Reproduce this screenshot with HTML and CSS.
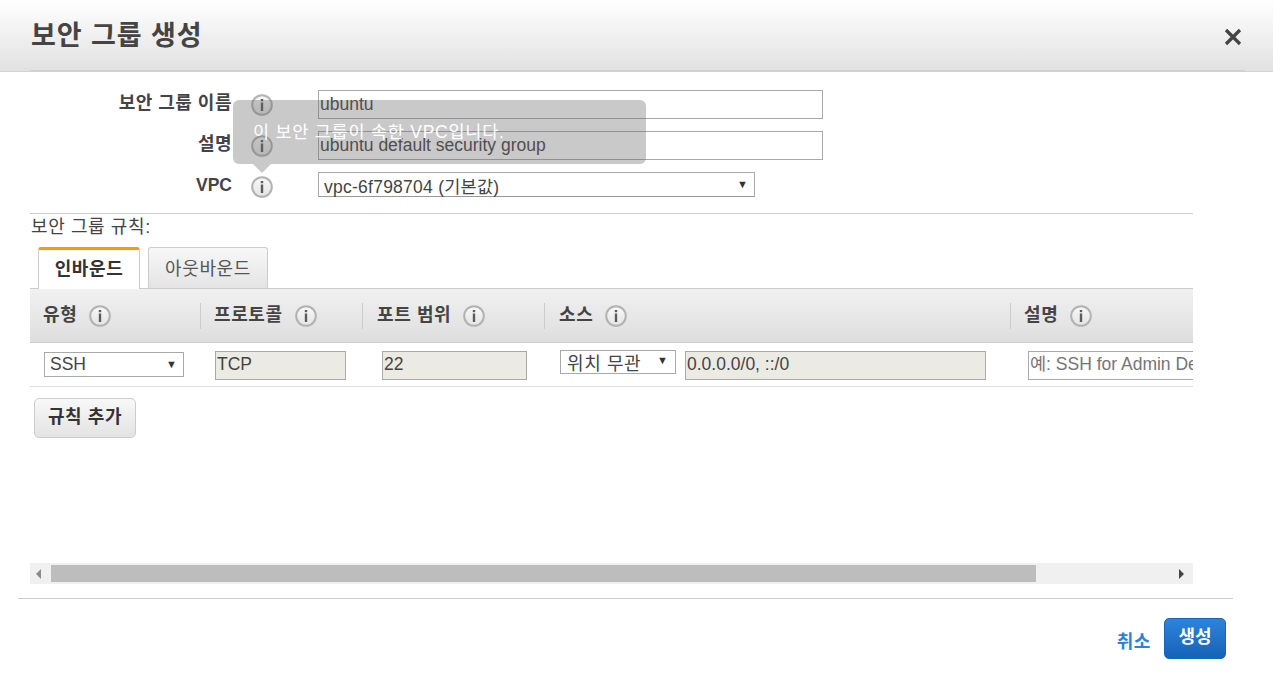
FILE: index.html
```html
<!DOCTYPE html>
<html lang="ko">
<head>
<meta charset="utf-8">
<title>보안 그룹 생성</title>
<link rel="stylesheet" href="styles.css">
</head>
<body>
<svg class="defs" width="0" height="0" aria-hidden="true">
  <defs>
    <linearGradient id="ig" x1="0" y1="0" x2="0" y2="1"><stop offset="0" stop-color="#f8f8f8"/><stop offset="1" stop-color="#e4e4e4"/></linearGradient>
    <symbol id="info" viewBox="0 0 22 22">
      <circle cx="11" cy="11" r="9.8" fill="url(#ig)" stroke="#b2b2b2" stroke-width="2"/>
      <rect x="9.8" y="5" width="2.4" height="2.2" fill="#5c5c5c"/>
      <rect x="9.8" y="8.5" width="2.4" height="8.5" fill="#5c5c5c"/>
    </symbol>
  </defs>
</svg>
<div class="dialog">
  <header class="head">
    <h1 class="title">보안 그룹 생성</h1>
    <svg class="close" width="18" height="18" viewBox="0 0 18 18"><path d="M2 2 16 16M16 2 2 16" stroke="#444" stroke-width="3.2" fill="none"/></svg>
  </header>
  <div class="body">
    <form class="form">
      <div class="row">
        <label class="lbl">보안 그룹 이름</label>
        <svg class="ico"><use href="#info"/></svg>
        <input class="inp inp-wide" value="ubuntu">
      </div>
      <div class="row">
        <label class="lbl">설명</label>
        <svg class="ico"><use href="#info"/></svg>
        <input class="inp inp-wide" value="ubuntu default security group">
      </div>
      <div class="row row-vpc">
        <label class="lbl">VPC</label>
        <svg class="ico"><use href="#info"/></svg>
        <div class="sel sel-vpc"><span>vpc-6f798704 (기본값)</span><i class="caret">▼</i></div>
      </div>
      <div class="tip">이 보안 그룹이 속한 VPC입니다.</div>
    </form>
    <section class="rules">
      <div class="rules-title">보안 그룹 규칙:</div>
      <div class="tabs">
        <div class="tab tab-on">인바운드</div>
        <div class="tab">아웃바운드</div>
      </div>
      <div class="table">
        <div class="grid thead">
          <div class="th">유형<svg class="ico"><use href="#info"/></svg></div>
          <div class="th sep">프로토콜<svg class="ico"><use href="#info"/></svg></div>
          <div class="th sep th-wide">포트 범위<svg class="ico"><use href="#info"/></svg></div>
          <div class="th sep th-wide">소스<svg class="ico"><use href="#info"/></svg></div>
          <div class="th sep">설명<svg class="ico"><use href="#info"/></svg></div>
        </div>
        <div class="grid tbody">
          <div class="td td-type"><div class="sel sel-type"><span>SSH</span><i class="caret">▼</i></div></div>
          <div class="td td-proto"><input class="inp ro ro-proto" value="TCP" readonly></div>
          <div class="td td-port"><input class="inp ro ro-port" value="22" readonly></div>
          <div class="td td-src">
            <div class="sel sel-src"><span>위치 무관</span><i class="caret">▼</i></div>
            <input class="inp ro ro-cidr" value="0.0.0.0/0, ::/0" readonly>
          </div>
          <div class="td td-desc"><input class="inp inp-desc" placeholder="예: SSH for Admin Desktop"></div>
        </div>
      </div>
      <button type="button" class="btn-add">규칙 추가</button>
      <div class="scroll">
        <span class="arr arr-l"></span>
        <span class="thumb"></span>
        <span class="arr arr-r"></span>
      </div>
    </section>
  </div>
  <footer class="foot">
    <a class="cancel">취소</a>
    <button type="button" class="btn-create">생성</button>
  </footer>
</div>
</body>
</html>
```

FILE: styles.css
```css
* { box-sizing: border-box; }
html, body { margin: 0; height: 100%; overflow: hidden; background: #fff; }
body { font-family: "Liberation Sans", "Noto Sans CJK KR", sans-serif; font-size: 17.5px; color: #444; }
.defs { position: absolute; }
.dialog { width: 1273px; height: 682px; display: flex; flex-direction: column; }

.head { position: relative; height: 72px; flex: none; padding: 0 31px; display: flex; align-items: center; justify-content: space-between; background: linear-gradient(#fff, #e1e1e1); border-bottom: 1px solid #d2d2d2; }
.head::after { content: ""; position: absolute; left: 30px; right: 28px; bottom: 0; height: 1px; background: #cfcfcf; }
.title { margin: 0; font-size: 27px; font-weight: 700; color: #444; line-height: 30px; letter-spacing: .95px; }
.close { margin-top: 2px; }

.body { padding: 0 80px 0 30px; }
.form { position: relative; padding-top: 18px; height: 142px; border-bottom: 1px solid #ccc; }
.row { display: flex; align-items: center; height: 29px; margin-bottom: 12px; }
.row-vpc { height: 25px; margin: 0; }
.lbl { width: 202px; text-align: right; font-size: 18px; letter-spacing: .5px; font-weight: 700; color: #444; margin-top: -7px; }
.row-vpc .lbl { font-size: 17.5px; letter-spacing: 0; margin-top: 1px; }
.ico { width: 22px; height: 22px; flex: none; }
.row .ico { margin-left: 19px; margin-right: 45px; margin-top: 1px; }
.row-vpc .ico { margin-top: 5px; }

.inp { font: inherit; color: #444; height: 29px; padding: 0 1px; border: 1px solid #a9a9a9; background: #fff; border-radius: 0; outline: 0; }
.inp-wide { width: 505px; }
.sel { display: flex; align-items: center; justify-content: space-between; border: 1px solid #a9a9a9; background: #fff; padding: 0 6px 0 5px; height: 25px; color: #444; }
.sel-vpc { width: 437px; border-bottom-color: #999; }
.sel-vpc span { margin-top: 2px; letter-spacing: .25px; white-space: nowrap; }
.caret { font-style: normal; font-size: 11px; color: #333; margin-top: -2px; }

.tip { position: absolute; left: 203px; top: 28px; width: 413px; height: 64px; padding: 20px 20px; border-radius: 6px; background: rgba(100,100,100,.35); color: #fff; font-size: 17.5px; letter-spacing: .75px; line-height: 24px; }
.tip::after { content: ""; position: absolute; left: 20px; top: 64px; border: 9px solid transparent; border-top-color: rgba(100,100,100,.35); border-bottom: 0; }

.rules-title { height: 33px; padding-left: 1px; line-height: 26px; font-size: 18px; letter-spacing: .6px; color: #444; }
.tabs { display: flex; gap: 8px; padding-left: 8px; height: 42px; border-bottom: 1px solid #ccc; }
.tab { width: 120px; height: 41px; padding-bottom: 2px; display: flex; align-items: center; justify-content: center; font-size: 18px; letter-spacing: .6px; border: 1px solid #ccc; border-bottom: 0; border-radius: 3px 3px 0 0; background: linear-gradient(#f8f8f8, #e4e4e4); color: #555; }
.tab-on { width: 102px; height: 42px; padding-bottom: 5px; border-top: 3px solid #f90; background: #fff; font-weight: 700; color: #333; }

.table { width: 1163px; overflow: hidden; }
.grid { display: grid; grid-template-columns: 170px 162px 182px 466px 183px; }
.thead { height: 54px; align-items: center; background: linear-gradient(#f1f1f1, #dedede); border-bottom: 1px solid #ccc; }
.th { display: flex; align-items: center; gap: 12px; height: 26px; padding: 0 0 6px 13px; font-size: 18px; letter-spacing: .6px; font-weight: 700; color: #444; white-space: nowrap; }
.th-wide { padding-left: 14px; }
.th .ico { margin-top: 6px; }
.sep { border-left: 1px solid #ccc; }
.tbody { height: 44px; border-bottom: 1px solid #ddd; }
.td { display: flex; align-items: flex-start; }
.td-type { padding: 9px 0 0 14px; }
.td-proto { padding: 8px 0 0 15px; }
.td-port { padding: 8px 0 0 20px; }
.td-src { padding: 7px 0 0 16px; gap: 9px; }
.td-desc { padding: 8px 0 0 18px; }
.sel-type { width: 140px; }
.sel-src { width: 116px; height: 24px; padding: 0 7px 0 6px; }
.sel-src span { font-size: 18px; letter-spacing: .6px; }
.sel-src .caret { margin-top: -4px; }
.ro { background: #ebebe4; border-color: #a9a9a9; padding-bottom: 2px; }
.ro-proto { width: 131px; }
.ro-port { width: 145px; }
.ro-cidr { width: 301px; margin-top: 1px; }
.inp-desc { width: 240px; padding-bottom: 2px; }
.inp-desc::placeholder { color: #757575; opacity: 1; }

.btn-add { display: block; margin: 11px 0 0 4px; width: 102px; height: 40px; font: inherit; font-size: 18px; letter-spacing: .6px; font-weight: 700; color: #333; border: 1px solid #ccc; border-radius: 5px; background: linear-gradient(#f8f8f8, #e3e3e3); padding: 0 0 6px; }

.scroll { margin-top: 125px; width: 1163px; height: 21px; background: #f0f0f0; display: flex; align-items: center; padding: 0 9px 0 6px; }
.thumb { width: 985px; height: 17px; background: #bdbdbd; margin-left: 10px; }
.arr { width: 0; height: 0; border: 5px solid transparent; }
.arr-l { border-right-color: #8a8a8a; border-left: 0; }
.arr-r { border-left-color: #444; border-right: 0; margin-left: auto; }

.foot { margin: 14px 40px 0 18px; padding: 19px 7px 0 0; border-top: 1px solid #ccc; display: flex; justify-content: flex-end; align-items: flex-start; gap: 13px; }
.cancel { font-size: 18px; letter-spacing: .6px; font-weight: 700; color: #2f81d6; margin-top: 9px; }
.btn-create { width: 62px; height: 41px; font: inherit; font-size: 18px; font-weight: 700; color: #fff; border: 1px solid #1a66b5; border-radius: 5px; background: linear-gradient(#2f83da, #1463b8); padding: 0 0 8px; }
```
